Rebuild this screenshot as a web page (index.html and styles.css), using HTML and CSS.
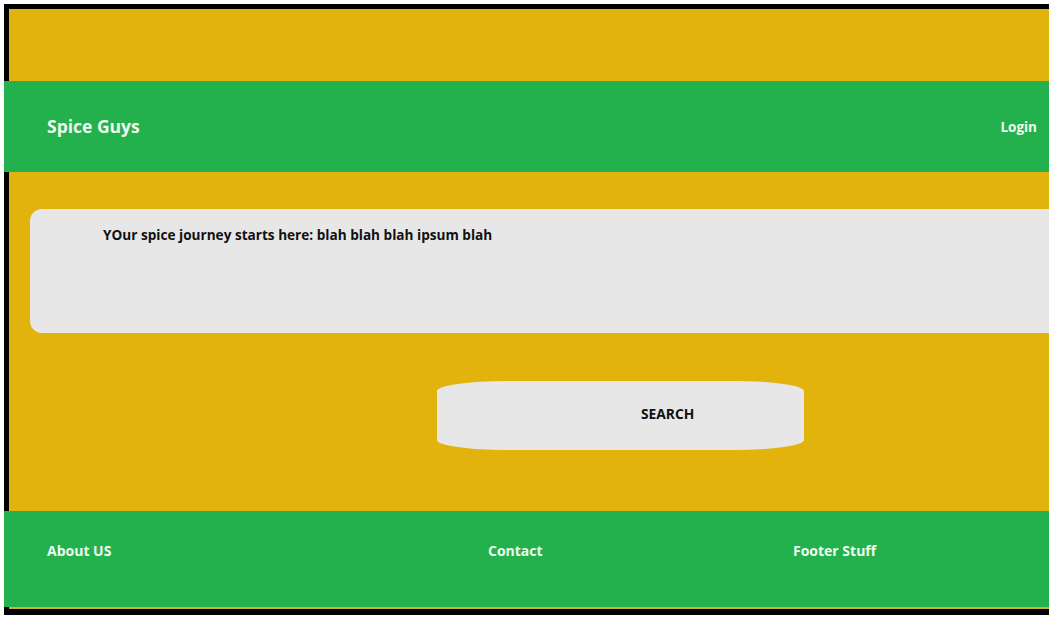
FILE: index.html
```html
<!DOCTYPE html>
<html>
<head>
<meta charset="utf-8">
<link rel="stylesheet" href="styles.css">
</head>
<body>
<div class="frame">
  <div class="band-top"></div>
  <header class="header">
    <span class="brand">Spice Guys</span>
    <a class="login">Login</a>
  </header>
  <main class="main">
    <section class="hero">
      <p class="hero-text">YOur spice journey starts here: blah blah blah ipsum blah</p>
    </section>
    <button class="search">SEARCH</button>
  </main>
  <footer class="footer">
    <span class="f-item f-about">About US</span>
    <span class="f-item f-contact">Contact</span>
    <span class="f-item f-stuff">Footer Stuff</span>
  </footer>
  <div class="band-bottom"></div>
</div>
</body>
</html>
```
FILE: styles.css
```css
html, body {
  margin: 0;
  padding: 0;
  background: #fff;
}
body {
  font-family: "Open Sans", Lato, sans-serif;
}
.frame {
  margin: 4px 0 0 4px;
  width: 1045px;
  background: #000;
  padding-top: 5px;
  padding-bottom: 6px;
  display: flex;
  flex-direction: column;
}
.band-top {
  height: 72px;
  margin-left: 5px;
  background: #e2b30d;
}
.header {
  height: 91px;
  background: #23b14d;
  display: flex;
  align-items: center;
  justify-content: space-between;
  padding: 0 12px 0 43px;
  color: #effbef;
  font-weight: 700;
}
.brand {
  font-size: 17.5px;
  margin-top: -2px;
}
.login {
  font-size: 13.5px;
}
.main {
  margin-left: 5px;
  height: 339px;
  background: #e2b30d;
  display: flex;
  flex-direction: column;
  align-items: flex-start;
  box-sizing: border-box;
  padding-top: 37px;
}
.hero {
  margin-left: 21px;
  align-self: stretch;
  height: 124px;
  background: #e7e7e7;
  border-radius: 12px 0 0 12px;
  box-sizing: border-box;
  padding: 16px 0 0 73px;
}
.hero-text {
  margin: 0;
  font-size: 13.6px;
  font-weight: 700;
  color: #111;
}
.search {
  margin: 48px 0 0 428px;
  width: 367px;
  height: 69px;
  border: none;
  background: #e7e7e7;
  border-radius: 70px / 10px;
  font-family: "Open Sans", Lato, sans-serif;
  font-weight: 700;
  font-size: 13.8px;
  color: #111;
  padding: 0 0 4px 204px;
  text-align: left;
}
.footer {
  height: 96px;
  background: #23b14d;
  display: flex;
  align-items: center;
  color: #effbef;
  font-weight: 700;
  font-size: 14px;
}
.f-item {
  margin-top: -18px;
}
.f-about { margin-left: 43px; width: 441px; }
.f-contact { width: 305px; }
.band-bottom {
  height: 2px;
  margin-left: 5px;
  background: #c9b62a;
}
```
